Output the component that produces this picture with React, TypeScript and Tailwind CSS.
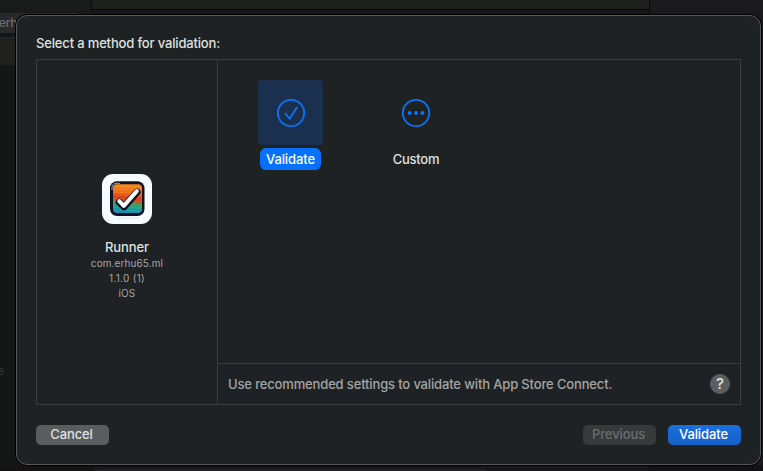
import React from "react";

function AppIcon() {
  return (
    <svg width="50" height="50" viewBox="0 0 50 50" aria-hidden="true">
      <defs>
        <linearGradient id="tile" x1="0.1" y1="0" x2="0" y2="1">
          <stop offset="0" stopColor="#f58a1c" />
          <stop offset="0.26" stopColor="#f0701a" />
          <stop offset="0.42" stopColor="#e0401f" />
          <stop offset="0.54" stopColor="#c8552a" />
          <stop offset="0.6" stopColor="#3fa050" />
          <stop offset="0.76" stopColor="#20a596" />
          <stop offset="1" stopColor="#128bc8" />
        </linearGradient>
        <pattern id="dots" width="3" height="3" patternUnits="userSpaceOnUse">
          <rect x="0" y="0" width="1" height="1" fill="#ffd24a" opacity="0.18" />
          <rect x="1.5" y="1.5" width="1" height="1" fill="#3a1a20" opacity="0.15" />
        </pattern>
      </defs>
      <rect width="50" height="50" rx="11" fill="#f6fbff" />
      <rect x="15" y="43.5" width="22" height="1" fill="#dce7ee" />
      <rect x="8" y="7.3" width="34.5" height="34.7" rx="7" fill="#111226" />
      <path d="M10 16V14Q10 9.3 15 9.3H18" fill="none" stroke="#a9b3c0" strokeWidth="0.9" />
      <rect x="11" y="10.3" width="29" height="28.7" rx="4" fill="url(#tile)" />
      <rect x="11" y="10.3" width="29" height="28.7" rx="4" fill="url(#dots)" />
      <path d="M17.3 28.2L22 32.8L35 18.2" fill="none" stroke="#111226" strokeWidth="7.2" strokeLinecap="round" strokeLinejoin="round" />
      <path d="M17.3 27.2L21.8 31.8L34.8 17.2" fill="none" stroke="#ffffff" strokeWidth="4" strokeLinecap="round" strokeLinejoin="round" />
    </svg>
  );
}

function CheckCircle() {
  return (
    <svg width="30" height="30" viewBox="0 0 30 30" fill="none" stroke="#0a73fb" strokeWidth="1.8" strokeLinecap="round" strokeLinejoin="round">
      <circle cx="15" cy="15" r="13.2" />
      <path d="M9.4 15.6L13.6 20.8L20.8 9.6" />
    </svg>
  );
}

function DotsCircle() {
  return (
    <svg width="30" height="30" viewBox="0 0 30 30" fill="#0a73fb">
      <circle cx="15" cy="15" r="13.2" fill="none" stroke="#0a73fb" strokeWidth="1.8" />
      <circle cx="8.6" cy="15" r="2" />
      <circle cx="15" cy="15" r="2" />
      <circle cx="21.4" cy="15" r="2" />
    </svg>
  );
}

function Backdrop() {
  return (
    <div className="flex h-full w-full bg-[#151617]">
      <div className="flex w-[92px] shrink-0 flex-col border-r border-[#0b0c0c]">
        <div className="h-[13px] bg-[#191b1b]" />
        <div className="h-5 w-[79px] rounded-r bg-[#28292a] text-[12px] leading-[19px] tracking-[-0.3px] text-[#6a6c6c]">
          <span className="-ml-px">erhu65</span>
        </div>
        <div className="h-1 bg-[#141516]" />
        <div className="h-7 border-t border-[#292b2b] bg-[#20211f]" />
        <div className="flex-1 bg-[#151716] pt-[298px] text-[12px] leading-[16px] text-[#343636]">
          <span className="-ml-[3px]">e</span>
        </div>
        <div className="h-[5px] bg-[#141213]" />
      </div>
      <div className="flex w-[558px] shrink-0 flex-col justify-between border-r border-[#090a0a] bg-[#171618]">
        <div className="h-[10px] border-b border-[#070808] bg-[#1d1f1d]" />
        <div className="ml-[3px] h-[2px] w-[391px] rounded-t bg-[#232023]" />
      </div>
      <div className="flex flex-1 flex-col justify-between bg-[#1a1a1c]">
        <div />
        <div className="h-[6px] bg-[#131214]" />
      </div>
    </div>
  );
}

export default function App() {
  return (
    <div className="relative h-[471px] w-[763px] overflow-hidden font-['Inter','Liberation_Sans',sans-serif] text-[13px] leading-4 font-medium text-[#dfe1e1]">
      <Backdrop />
      <div className="absolute top-[15px] left-4 flex h-[450px] w-[745px] flex-col rounded-[11px] border border-[#565959] bg-[#1e2223] px-[19px] pt-[19px] shadow-[0_0_0_1px_#000]">
        <h1 className="h-6 whitespace-nowrap"><span className="tracking-[-0.16px]">Select a method for validation:</span></h1>
        <div className="flex h-[346px] border border-[#3a3e40] bg-[#1e2225]">
          <aside className="flex w-[181px] flex-col items-center border-r border-[#3a3e40] pt-[114px]">
            <AppIcon />
            <div className="mt-[15px] tracking-[-0.1px]">Runner</div>
            <div className="mt-px text-center text-[10px] leading-[15px] font-normal text-[#a4a6a7]">
              <div className="tracking-[0.1px]">com.erhu65.ml</div>
              <div className="tracking-[0.3px]">1.1.0 (1)</div>
              <div className="tracking-[0.1px]">iOS</div>
            </div>
          </aside>
          <section className="flex flex-1 flex-col">
            <div className="flex flex-1 gap-[60px] bg-[#1e2223] pt-5 pl-10">
              <div className="flex w-[65px] flex-col items-center">
                <div className="flex h-[65px] w-[65px] items-center justify-center rounded-[4px] bg-[#1b304e]"><CheckCircle /></div>
                <div className="mt-[3px] flex h-[22px] w-[61px] items-center justify-center rounded-[6px] bg-[#0670ff] tracking-[-0.1px] text-white">Validate</div>
              </div>
              <div className="flex w-[65px] flex-col items-center">
                <div className="flex h-[65px] items-center"><DotsCircle /></div>
                <div className="mt-[3px] flex h-[22px] items-center pl-px tracking-[-0.25px]">Custom</div>
              </div>
            </div>
            <div className="flex h-[41px] items-center justify-between border-t border-[#3a3e40] px-[10px] text-[#a3a5a6]">
              <span className="whitespace-nowrap tracking-[-0.15px]">Use recommended settings to validate with App Store Connect.</span>
              <button className="flex h-5 w-5 items-center justify-center rounded-full bg-[#5b5e5f] text-[15px] text-[#e5e6e6]">?</button>
            </div>
          </section>
        </div>
        <div className="mt-5 flex h-5 justify-between tracking-[-0.1px]">
          <button className="h-5 w-[73px] rounded-[5px] bg-[#5a5d5e] pr-[2px] pb-[2px]">Cancel</button>
          <div className="flex gap-3">
            <button className="h-5 w-[73px] rounded-[5px] bg-[#363a3b] pr-[2px] pb-[2px] text-[#6b6e6f]">Previous</button>
            <button className="h-5 w-[73px] rounded-[5px] bg-linear-to-b from-[#1b70df] to-[#1560c6] pr-[2px] pb-[2px] text-white">Validate</button>
          </div>
        </div>
      </div>
    </div>
  );
}
